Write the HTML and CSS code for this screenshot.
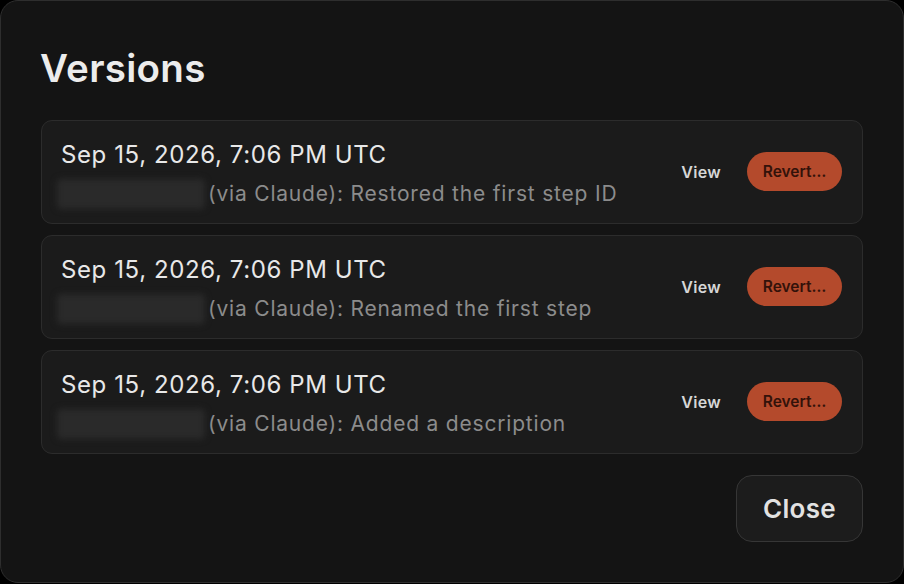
FILE: index.html
```html
<!DOCTYPE html>
<html>
<head>
<meta charset="utf-8">
<link rel="stylesheet" href="styles.css">
</head>
<body>
<div class="dialog">
  <h1 class="title">Versions</h1>
  <div class="list">
    <div class="card">
      <div class="info">
        <div class="date">Sep 15, 2026, 7:06 PM UTC</div>
        <div class="desc"><span class="redacted"></span><span class="msg">(via Claude): Restored the first step ID</span></div>
      </div>
      <div class="actions">
        <button class="view">View</button>
        <button class="revert">Revert…</button>
      </div>
    </div>
    <div class="card">
      <div class="info">
        <div class="date">Sep 15, 2026, 7:06 PM UTC</div>
        <div class="desc"><span class="redacted"></span><span class="msg">(via Claude): Renamed the first step</span></div>
      </div>
      <div class="actions">
        <button class="view">View</button>
        <button class="revert">Revert…</button>
      </div>
    </div>
    <div class="card">
      <div class="info">
        <div class="date">Sep 15, 2026, 7:06 PM UTC</div>
        <div class="desc"><span class="redacted"></span><span class="msg">(via Claude): Added a description</span></div>
      </div>
      <div class="actions">
        <button class="view">View</button>
        <button class="revert">Revert…</button>
      </div>
    </div>
  </div>
  <div class="footer">
    <button class="close">Close</button>
  </div>
</div>
</body>
</html>
```

FILE: styles.css
```css
html, body {
  margin: 0;
  padding: 0;
  background: #000;
  width: 904px;
  height: 584px;
  overflow: hidden;
}
body {
  font-family: "Inter", "Noto Sans", sans-serif;
}
.dialog {
  box-sizing: border-box;
  width: 904px;
  height: 583px;
  background: #141414;
  border: 1px solid #2e2e2e;
  border-radius: 18px;
  padding: 44px 40px 0 40px;
}
.title {
  margin: 0;
  font-size: 38.5px;
  font-weight: 600;
  color: #ececec;
  line-height: 46px;
  letter-spacing: 0.3px;
  margin-left: -1px;
}
.list {
  margin-top: 29px;
  display: flex;
  flex-direction: column;
  gap: 11px;
}
.card {
  box-sizing: border-box;
  height: 104px;
  background: #1b1b1b;
  border: 1px solid #2c2c2c;
  border-radius: 11px;
  display: flex;
  align-items: center;
  justify-content: space-between;
  padding: 0 20px 0 20px;
}
.info {
  display: flex;
  flex-direction: column;
  margin-top: 7px;
}
.date {
  font-size: 24px;
  color: #e8e8e8;
  line-height: 30px;
  letter-spacing: 0.6px;
  margin-left: -1px;
}
.desc {
  display: flex;
  align-items: center;
  margin-top: 7px;
  height: 34px;
}
.redacted {
  display: inline-block;
  width: 148px;
  height: 30px;
  margin-left: -5px;
  margin-right: 3px;
  background: #2a2a2a;
  border-radius: 4px;
  filter: blur(3px);
}
.msg {
  font-size: 21px;
  color: #8c8c8c;
  line-height: 28px;
  letter-spacing: 0.8px;
}
.actions {
  display: flex;
  align-items: center;
  gap: 26px;
  margin-top: -1px;
}
button {
  font-family: inherit;
  border: none;
  cursor: pointer;
}
.view {
  background: transparent;
  color: #d6d6d6;
  font-size: 16px;
  font-weight: 600;
  padding: 0;
  letter-spacing: 0.3px;
}
.revert {
  background: #b44a2c;
  color: #33120a;
  font-size: 15.5px;
  font-weight: 600;
  height: 39px;
  width: 95px;
  border-radius: 20px;
  padding: 0;
}
.footer {
  display: flex;
  justify-content: flex-end;
  margin-top: 21px;
}
.close {
  box-sizing: border-box;
  width: 127px;
  height: 67px;
  background: #1c1c1c;
  border: 1px solid #363636;
  border-radius: 16px;
  color: #e2e2e2;
  font-size: 26px;
  font-weight: 600;
  letter-spacing: 0.3px;
}
```
